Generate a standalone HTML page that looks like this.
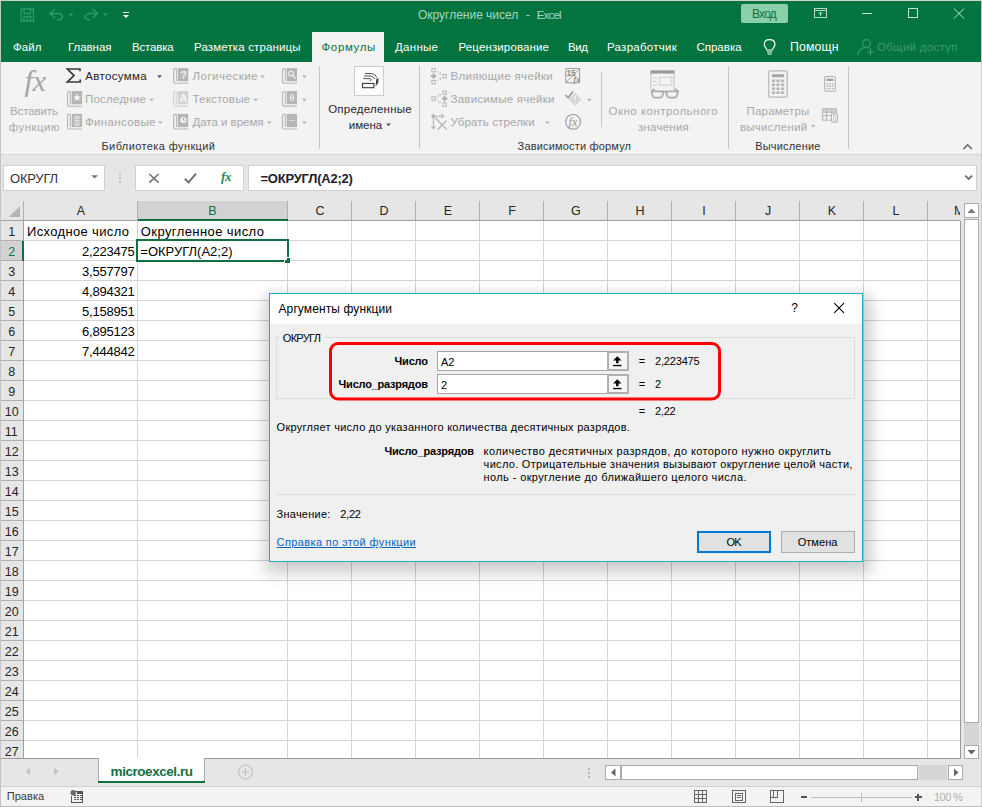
<!DOCTYPE html>
<html lang="ru"><head><meta charset="utf-8"><title>Округление чисел - Excel</title>
<style>
html,body{margin:0;padding:0;background:#e6e6e6;overflow:hidden}
#app{position:relative;width:982px;height:807px;overflow:hidden;background:#e6e6e6;font-family:"Liberation Sans", sans-serif}
#app svg.bg{position:absolute;left:0;top:0}
.t{position:absolute;white-space:pre;line-height:1;margin:0;padding:0}
</style></head><body>
<div id="app">
<svg class="bg" width="982" height="807" viewBox="0 0 982 807" shape-rendering="crispEdges">
<defs><filter id="sh" x="-10%" y="-10%" width="120%" height="125%"><feGaussianBlur stdDeviation="8"/></filter><pattern id="dot" width="2" height="2" patternUnits="userSpaceOnUse"><rect width="2" height="2" fill="#dcdcdc"/><rect width="1" height="1" fill="#d0d0d0"/><rect x="1" y="1" width="1" height="1" fill="#d0d0d0"/></pattern><pattern id="dot2" width="2" height="2" patternUnits="userSpaceOnUse"><rect width="2" height="2" fill="#d4d4d4"/><rect width="1" height="1" fill="#d0d0d0"/><rect x="1" y="1" width="1" height="1" fill="#d0d0d0"/></pattern></defs>
<rect x="0" y="0" width="982" height="62" fill="#03743f"/>
<rect x="312" y="32" width="72" height="30" fill="#f3f3f3"/>
<rect x="741" y="4" width="47" height="19" rx="2" fill="#8ccfab" shape-rendering="geometricPrecision"/>
<rect x="0" y="62" width="982" height="92" fill="#f3f3f3"/>
<rect x="0" y="154" width="982" height="1" fill="#d4d4d4"/>
<line x1="319.5" y1="66" x2="319.5" y2="149" stroke="#c6c6c6"/>
<line x1="419.5" y1="66" x2="419.5" y2="149" stroke="#c6c6c6"/>
<line x1="601.5" y1="72" x2="601.5" y2="127" stroke="#c6c6c6"/>
<line x1="728.5" y1="66" x2="728.5" y2="149" stroke="#c6c6c6"/>
<line x1="848.5" y1="66" x2="848.5" y2="149" stroke="#c6c6c6"/>
<rect x="354.5" y="66.5" width="29" height="29" fill="#fcfcfc" stroke="#cdcdcd"/>
<rect x="3.5" y="165.5" width="101" height="25" fill="#ffffff" stroke="#d0d0d0"/>
<rect x="135.5" y="165.5" width="108" height="25" fill="#ffffff" stroke="#d0d0d0"/>
<rect x="248.5" y="165.5" width="728" height="25" fill="#ffffff" stroke="#d0d0d0"/>
<rect x="24" y="221" width="936" height="538" fill="#ffffff"/>
<rect x="138" y="201" width="149" height="19" fill="url(#dot2)"/>
<rect x="0" y="241" width="23" height="19" fill="url(#dot2)"/>
<line x1="23.5" y1="201" x2="23.5" y2="221" stroke="#b0b0b0"/>
<line x1="137.5" y1="201" x2="137.5" y2="221" stroke="#b0b0b0"/>
<line x1="287.5" y1="201" x2="287.5" y2="221" stroke="#b0b0b0"/>
<line x1="351.5" y1="201" x2="351.5" y2="221" stroke="#b0b0b0"/>
<line x1="415.5" y1="201" x2="415.5" y2="221" stroke="#b0b0b0"/>
<line x1="479.5" y1="201" x2="479.5" y2="221" stroke="#b0b0b0"/>
<line x1="543.5" y1="201" x2="543.5" y2="221" stroke="#b0b0b0"/>
<line x1="607.5" y1="201" x2="607.5" y2="221" stroke="#b0b0b0"/>
<line x1="671.5" y1="201" x2="671.5" y2="221" stroke="#b0b0b0"/>
<line x1="735.5" y1="201" x2="735.5" y2="221" stroke="#b0b0b0"/>
<line x1="799.5" y1="201" x2="799.5" y2="221" stroke="#b0b0b0"/>
<line x1="863.5" y1="201" x2="863.5" y2="221" stroke="#b0b0b0"/>
<line x1="927.5" y1="201" x2="927.5" y2="221" stroke="#b0b0b0"/>
<line x1="137.5" y1="221" x2="137.5" y2="758" stroke="#d4d4d4"/>
<line x1="287.5" y1="221" x2="287.5" y2="758" stroke="#d4d4d4"/>
<line x1="351.5" y1="221" x2="351.5" y2="758" stroke="#d4d4d4"/>
<line x1="415.5" y1="221" x2="415.5" y2="758" stroke="#d4d4d4"/>
<line x1="479.5" y1="221" x2="479.5" y2="758" stroke="#d4d4d4"/>
<line x1="543.5" y1="221" x2="543.5" y2="758" stroke="#d4d4d4"/>
<line x1="607.5" y1="221" x2="607.5" y2="758" stroke="#d4d4d4"/>
<line x1="671.5" y1="221" x2="671.5" y2="758" stroke="#d4d4d4"/>
<line x1="735.5" y1="221" x2="735.5" y2="758" stroke="#d4d4d4"/>
<line x1="799.5" y1="221" x2="799.5" y2="758" stroke="#d4d4d4"/>
<line x1="863.5" y1="221" x2="863.5" y2="758" stroke="#d4d4d4"/>
<line x1="927.5" y1="221" x2="927.5" y2="758" stroke="#d4d4d4"/>
<line x1="24" y1="240.5" x2="960" y2="240.5" stroke="#d4d4d4"/>
<line x1="0" y1="240.5" x2="23" y2="240.5" stroke="#b0b0b0"/>
<line x1="24" y1="260.5" x2="960" y2="260.5" stroke="#d4d4d4"/>
<line x1="0" y1="260.5" x2="23" y2="260.5" stroke="#b0b0b0"/>
<line x1="24" y1="280.5" x2="960" y2="280.5" stroke="#d4d4d4"/>
<line x1="0" y1="280.5" x2="23" y2="280.5" stroke="#b0b0b0"/>
<line x1="24" y1="300.5" x2="960" y2="300.5" stroke="#d4d4d4"/>
<line x1="0" y1="300.5" x2="23" y2="300.5" stroke="#b0b0b0"/>
<line x1="24" y1="320.5" x2="960" y2="320.5" stroke="#d4d4d4"/>
<line x1="0" y1="320.5" x2="23" y2="320.5" stroke="#b0b0b0"/>
<line x1="24" y1="340.5" x2="960" y2="340.5" stroke="#d4d4d4"/>
<line x1="0" y1="340.5" x2="23" y2="340.5" stroke="#b0b0b0"/>
<line x1="24" y1="360.5" x2="960" y2="360.5" stroke="#d4d4d4"/>
<line x1="0" y1="360.5" x2="23" y2="360.5" stroke="#b0b0b0"/>
<line x1="24" y1="380.5" x2="960" y2="380.5" stroke="#d4d4d4"/>
<line x1="0" y1="380.5" x2="23" y2="380.5" stroke="#b0b0b0"/>
<line x1="24" y1="400.5" x2="960" y2="400.5" stroke="#d4d4d4"/>
<line x1="0" y1="400.5" x2="23" y2="400.5" stroke="#b0b0b0"/>
<line x1="24" y1="420.5" x2="960" y2="420.5" stroke="#d4d4d4"/>
<line x1="0" y1="420.5" x2="23" y2="420.5" stroke="#b0b0b0"/>
<line x1="24" y1="440.5" x2="960" y2="440.5" stroke="#d4d4d4"/>
<line x1="0" y1="440.5" x2="23" y2="440.5" stroke="#b0b0b0"/>
<line x1="24" y1="460.5" x2="960" y2="460.5" stroke="#d4d4d4"/>
<line x1="0" y1="460.5" x2="23" y2="460.5" stroke="#b0b0b0"/>
<line x1="24" y1="480.5" x2="960" y2="480.5" stroke="#d4d4d4"/>
<line x1="0" y1="480.5" x2="23" y2="480.5" stroke="#b0b0b0"/>
<line x1="24" y1="500.5" x2="960" y2="500.5" stroke="#d4d4d4"/>
<line x1="0" y1="500.5" x2="23" y2="500.5" stroke="#b0b0b0"/>
<line x1="24" y1="520.5" x2="960" y2="520.5" stroke="#d4d4d4"/>
<line x1="0" y1="520.5" x2="23" y2="520.5" stroke="#b0b0b0"/>
<line x1="24" y1="540.5" x2="960" y2="540.5" stroke="#d4d4d4"/>
<line x1="0" y1="540.5" x2="23" y2="540.5" stroke="#b0b0b0"/>
<line x1="24" y1="560.5" x2="960" y2="560.5" stroke="#d4d4d4"/>
<line x1="0" y1="560.5" x2="23" y2="560.5" stroke="#b0b0b0"/>
<line x1="24" y1="580.5" x2="960" y2="580.5" stroke="#d4d4d4"/>
<line x1="0" y1="580.5" x2="23" y2="580.5" stroke="#b0b0b0"/>
<line x1="24" y1="600.5" x2="960" y2="600.5" stroke="#d4d4d4"/>
<line x1="0" y1="600.5" x2="23" y2="600.5" stroke="#b0b0b0"/>
<line x1="24" y1="620.5" x2="960" y2="620.5" stroke="#d4d4d4"/>
<line x1="0" y1="620.5" x2="23" y2="620.5" stroke="#b0b0b0"/>
<line x1="24" y1="640.5" x2="960" y2="640.5" stroke="#d4d4d4"/>
<line x1="0" y1="640.5" x2="23" y2="640.5" stroke="#b0b0b0"/>
<line x1="24" y1="660.5" x2="960" y2="660.5" stroke="#d4d4d4"/>
<line x1="0" y1="660.5" x2="23" y2="660.5" stroke="#b0b0b0"/>
<line x1="24" y1="680.5" x2="960" y2="680.5" stroke="#d4d4d4"/>
<line x1="0" y1="680.5" x2="23" y2="680.5" stroke="#b0b0b0"/>
<line x1="24" y1="700.5" x2="960" y2="700.5" stroke="#d4d4d4"/>
<line x1="0" y1="700.5" x2="23" y2="700.5" stroke="#b0b0b0"/>
<line x1="24" y1="720.5" x2="960" y2="720.5" stroke="#d4d4d4"/>
<line x1="0" y1="720.5" x2="23" y2="720.5" stroke="#b0b0b0"/>
<line x1="24" y1="740.5" x2="960" y2="740.5" stroke="#d4d4d4"/>
<line x1="0" y1="740.5" x2="23" y2="740.5" stroke="#b0b0b0"/>
<line x1="0" y1="220.5" x2="960" y2="220.5" stroke="#a0a0a0"/>
<line x1="23.5" y1="221" x2="23.5" y2="758" stroke="#a0a0a0"/>
<line x1="960.5" y1="221" x2="960.5" y2="759" stroke="#9a9a9a"/>
<line x1="0" y1="758.5" x2="961" y2="758.5" stroke="#9a9a9a"/>
<path d="M20 206 L20 217 L9 217 Z" fill="#b4b4b4" shape-rendering="geometricPrecision"/>
<rect x="138" y="219" width="150" height="2" fill="#117040"/>
<rect x="22" y="241" width="2" height="20" fill="#117040"/>
<rect x="137" y="240" width="151" height="21" fill="none" stroke="#117040" stroke-width="2"/>
<rect x="284" y="257" width="6" height="6" fill="#ffffff"/>
<rect x="285" y="260" width="5" height="3" fill="#117040"/>
<rect x="287" y="258" width="3" height="2" fill="#117040"/>
<rect x="964.5" y="203.5" width="14" height="14" fill="#ffffff" stroke="#ababab"/>
<rect x="964.5" y="219.5" width="14" height="503" fill="#ffffff" stroke="#ababab"/>
<rect x="964" y="723" width="15" height="22" fill="url(#dot)"/>
<rect x="964.5" y="745.5" width="14" height="13" fill="#ffffff" stroke="#ababab"/>
<path d="M967.5 213 L971.5 208.5 L975.5 213 Z" fill="#777" shape-rendering="geometricPrecision"/>
<path d="M967.5 750 L971.5 754.5 L975.5 750 Z" fill="#666" shape-rendering="geometricPrecision"/>
<rect x="605.5" y="765.5" width="15" height="14" fill="#ffffff" stroke="#ababab"/>
<rect x="621.5" y="765.5" width="296" height="14" fill="#ffffff" stroke="#ababab"/>
<rect x="919" y="765" width="28" height="15" fill="url(#dot)"/>
<rect x="948.5" y="765.5" width="14" height="14" fill="#ffffff" stroke="#ababab"/>
<path d="M615.5 768.5 L611 772.5 L615.5 776.5 Z" fill="#666" shape-rendering="geometricPrecision"/>
<path d="M954 768.5 L958.5 772.5 L954 776.5 Z" fill="#666" shape-rendering="geometricPrecision"/>
<rect x="588" y="768" width="2" height="2" fill="#b8b8b8"/>
<rect x="588" y="772" width="2" height="2" fill="#b8b8b8"/>
<rect x="588" y="776" width="2" height="2" fill="#b8b8b8"/>
<rect x="99" y="758" width="105" height="25" fill="#ffffff"/>
<line x1="98.5" y1="758" x2="98.5" y2="783" stroke="#ababab"/>
<line x1="204.5" y1="758" x2="204.5" y2="783" stroke="#ababab"/>
<rect x="98" y="781" width="107" height="2" fill="#117040"/>
<path d="M30 767.5 L25.5 771.5 L30 775.5 Z" fill="#c4c4c4" shape-rendering="geometricPrecision"/>
<path d="M54 767.5 L58.5 771.5 L54 775.5 Z" fill="#c4c4c4" shape-rendering="geometricPrecision"/>
<g shape-rendering="geometricPrecision" stroke="#c2c2c2" fill="none" stroke-width="1.2"><circle cx="245.5" cy="772" r="7"/><path d="M245.5 768 V776 M241.5 772 H249.5"/></g>
<rect x="0" y="786" width="982" height="21" fill="#f3f3f3"/>
<rect x="0" y="786" width="982" height="1" fill="#d0d0d0"/>
<g id="sticons"></g>
<rect x="0" y="0" width="982" height="1" fill="#cfd6d2"/>
<rect x="0" y="0" width="1" height="62" fill="#b9cdc2"/>
<rect x="981" y="0" width="1" height="62" fill="#b9cdc2"/>
<rect x="0" y="62" width="1" height="745" fill="#c4c4c4"/>
<rect x="981" y="62" width="1" height="745" fill="#cfcfcf"/>
<rect x="0" y="806" width="982" height="1" fill="#bdbdbd"/>
<rect x="265" y="295" width="606" height="278" fill="#000" opacity="0.2" filter="url(#sh)" shape-rendering="geometricPrecision"/>
<rect x="269" y="293" width="594" height="269" fill="#f0f0f0"/>
<rect x="269" y="293" width="594" height="31" fill="#ffffff"/>
<rect x="269.5" y="293.5" width="593" height="268" fill="none" stroke="#18b2c4"/>
<path d="M280 337.5 H276.5 V398.5 H854.5 V337.5 H323.5" fill="none" stroke="#dcdcdc"/>
<rect x="437.5" y="351.5" width="170" height="19" fill="#ffffff" stroke="#a6a6a6"/>
<rect x="608" y="352" width="20" height="18" fill="#f6f6f6" stroke="#b0b0b0" stroke-width="2"/>
<g shape-rendering="geometricPrecision" fill="#000"><path d="M617.3 356.2 l4.2 4.4 h-3 v2.6 h-2.4 v-2.6 h-3 z"/><rect x="613.1" y="364.9" width="8.4" height="1.3"/></g>
<rect x="437.5" y="374.5" width="170" height="19" fill="#ffffff" stroke="#a6a6a6"/>
<rect x="608" y="375" width="20" height="18" fill="#f6f6f6" stroke="#b0b0b0" stroke-width="2"/>
<g shape-rendering="geometricPrecision" fill="#000"><path d="M617.3 379.2 l4.2 4.4 h-3 v2.6 h-2.4 v-2.6 h-3 z"/><rect x="613.1" y="387.9" width="8.4" height="1.3"/></g>
<rect x="330.5" y="343.5" width="389" height="55.5" rx="7.5" ry="7.5" fill="none" stroke="#ff0000" stroke-width="3" shape-rendering="geometricPrecision"/>
<rect x="276" y="494" width="580" height="1" fill="#dcdcdc"/>
<rect x="698" y="532" width="72" height="20" fill="#e1e1e1" stroke="#0078d7" stroke-width="2"/>
<rect x="781.5" y="531.5" width="73" height="21" fill="#e1e1e1" stroke="#adadad"/>
<path d="M834.2 303.1 L844 312.9 M844 303.1 L834.2 312.9" stroke="#000" stroke-width="1.1" fill="none" shape-rendering="geometricPrecision"/>
<g id="qat" shape-rendering="geometricPrecision" fill="none" stroke="#2e9a6a" stroke-width="1.3">
<!-- save -->
<path d="M21 9 H33.5 V21 H21 Z"/>
<path d="M24 9 V13.5 H30.5 V9"/>
<path d="M24 21 V16.5 H30.5 V21 M27 18 V21"/>
<!-- undo -->
<path d="M55 9 L50 13.5 L55 18" stroke-width="1.5"/>
<path d="M50.5 13.5 H58 C64 13.5 64 20 57 20" stroke-width="1.5"/>
<path d="M68.5 13.5 H73.5 L71 16 Z" fill="#2e9a6a" stroke="none"/>
<!-- redo -->
<path d="M92.5 9 L97.5 13.5 L92.5 18" stroke-width="1.5"/>
<path d="M97 13.5 H90 C83.5 13.5 83.5 20 90.5 20" stroke-width="1.5"/>
<path d="M103 13.5 H108 L105.5 16 Z" fill="#2e9a6a" stroke="none"/>
</g>
<g id="qatc" fill="#ffffff">
<rect x="123" y="12" width="6" height="1"/>
<path d="M123 15 H129 L126 18 Z" shape-rendering="geometricPrecision"/>
</g>
<g id="winbtns" shape-rendering="crispEdges" fill="none" stroke="#b4dcc6" stroke-width="1">
<!-- ribbon display -->
<rect x="814.5" y="8.5" width="12" height="9"/>
<line x1="814" y1="10.5" x2="827" y2="10.5"/>
<path d="M820.5 16 V12.5 M818.5 14 L820.5 12 L822.5 14" shape-rendering="geometricPrecision"/>
<!-- min -->
<line x1="862" y1="13.5" x2="872" y2="13.5" stroke="#c4e4d3"/>
<!-- max -->
<rect x="908.5" y="8.5" width="9" height="9" stroke="#c4e4d3"/>
<!-- close -->
<path d="M954 8.5 L964 18.5 M964 8.5 L954 18.5" shape-rendering="geometricPrecision" stroke="#c4e4d3" stroke-width="1"/>
</g>
<g id="tabicons" shape-rendering="geometricPrecision" fill="none">
<!-- lightbulb -->
<path d="M766.8 50 C766.8 48 764.3 47.3 764.3 44.3 C764.3 41.3 766.7 39.6 769.6 39.6 C772.5 39.6 774.9 41.3 774.9 44.3 C774.9 47.3 772.4 48 772.4 50 Z" stroke="#ffffff" stroke-width="1.2"/>
<path d="M767 52 H772.2 M767.6 54 H771.6" stroke="#ffffff" stroke-width="1.1"/>
<!-- person share -->
<circle cx="866.5" cy="43.5" r="3.8" stroke="#3f9a6a" stroke-width="1.2"/>
<path d="M858 55 C858 50 862 47.5 866 47.5 C868 47.5 869.5 48 870.5 48.8" stroke="#3f9a6a" stroke-width="1.2"/>
<path d="M870.5 49 V55.5 M867.3 52.2 H873.7" stroke="#3f9a6a" stroke-width="1.2"/>
</g>

<path d="M80 71.2 V69 H67.4 L74 75.6 L67.4 82 H80.2 V79.6" fill="none" stroke="#3a3a3a" stroke-width="1.7" stroke-linejoin="miter" shape-rendering="geometricPrecision"/>
<path d="M157 75.2 h5 l-2.5 2.8 z" fill="#555" shape-rendering="geometricPrecision"/>
<g shape-rendering="geometricPrecision">
<rect x="71.7" y="91.1" width="10.4" height="13.2" fill="#b6b6b6"/>
<path d="M70.3 91.6 H68.8 Q67.5 91.6 67.5 92.9 V104.5 Q67.5 106.2 69.3 106.2 H82.1" fill="none" stroke="#b6b6b6" stroke-width="1.1"/>
<path d="M70.3 91.6 V104.3" stroke="#b6b6b6" stroke-width="1" fill="none"/>
<path d="M77 93.6 l1.1 2.6 2.8 .2 -2.1 1.9 .7 2.8 -2.5 -1.5 -2.5 1.5 .7 -2.8 -2.1 -1.9 2.8 -.2z" fill="#f3f3f3"/>
</g>
<g shape-rendering="geometricPrecision">
<rect x="71.7" y="113.9" width="10.4" height="13.2" fill="#b6b6b6"/>
<path d="M70.3 114.4 H68.8 Q67.5 114.4 67.5 115.7 V127.3 Q67.5 129 69.3 129 H82.1" fill="none" stroke="#b6b6b6" stroke-width="1.1"/>
<path d="M70.3 114.4 V127.1" stroke="#b6b6b6" stroke-width="1" fill="none"/>
<g fill="none" stroke="#f3f3f3" stroke-width="1"><ellipse cx="77" cy="117.5" rx="2.8" ry="1.1"/><path d="M74.2 120 q2.8 1.8 5.6 0 M74.2 122.3 q2.8 1.8 5.6 0 M74.2 124.4 q2.8 1.8 5.6 0"/></g>
</g>
<path d="M149.2 98.8 h4.6 l-2.3 2.6 z" fill="#b6b6b6" shape-rendering="geometricPrecision"/>
<path d="M158 121.5 h4.6 l-2.3 2.6 z" fill="#b6b6b6" shape-rendering="geometricPrecision"/>
<g shape-rendering="geometricPrecision">
<rect x="177.8" y="68.1" width="10.4" height="13.2" fill="#b6b6b6"/>
<path d="M176.4 68.6 H174.9 Q173.6 68.6 173.6 69.9 V81.5 Q173.6 83.2 175.4 83.2 H188.2" fill="none" stroke="#b6b6b6" stroke-width="1.1"/>
<path d="M176.4 68.6 V81.3" stroke="#b6b6b6" stroke-width="1" fill="none"/>

</g>
<g shape-rendering="geometricPrecision">
<rect x="177.8" y="91" width="10.4" height="13.2" fill="#d2d2d2"/>
<path d="M176.4 91.5 H174.9 Q173.6 91.5 173.6 92.8 V104.4 Q173.6 106.1 175.4 106.1 H188.2" fill="none" stroke="#d2d2d2" stroke-width="1.1"/>
<path d="M176.4 91.5 V104.2" stroke="#d2d2d2" stroke-width="1" fill="none"/>

</g>
<g shape-rendering="geometricPrecision">
<rect x="177.8" y="113.9" width="10.4" height="13.2" fill="#b6b6b6"/>
<path d="M176.4 114.4 H174.9 Q173.6 114.4 173.6 115.7 V127.3 Q173.6 129 175.4 129 H188.2" fill="none" stroke="#b6b6b6" stroke-width="1.1"/>
<path d="M176.4 114.4 V127.1" stroke="#b6b6b6" stroke-width="1" fill="none"/>
<circle cx="183.4" cy="120" r="3.1" fill="#f3f3f3"/><path d="M183.4 118 V120.2 H185.2" stroke="#999" stroke-width=".9" fill="none"/>
</g>
<path d="M260.2 75.6 h4.6 l-2.3 2.6 z" fill="#b6b6b6" shape-rendering="geometricPrecision"/>
<path d="M253.4 98.8 h4.6 l-2.3 2.6 z" fill="#b6b6b6" shape-rendering="geometricPrecision"/>
<path d="M267 121.5 h4.6 l-2.3 2.6 z" fill="#b6b6b6" shape-rendering="geometricPrecision"/>
<g shape-rendering="geometricPrecision">
<rect x="286.6" y="68.1" width="10.4" height="13.2" fill="#b6b6b6"/>
<path d="M285.2 68.6 H283.7 Q282.4 68.6 282.4 69.9 V81.5 Q282.4 83.2 284.2 83.2 H297" fill="none" stroke="#b6b6b6" stroke-width="1.1"/>
<path d="M285.2 68.6 V81.3" stroke="#b6b6b6" stroke-width="1" fill="none"/>
<circle cx="291" cy="73.6" r="2.3" fill="none" stroke="#f3f3f3" stroke-width="1.1"/><path d="M292.8 75.4 L295.3 78.2" stroke="#f3f3f3" stroke-width="1.3"/>
</g>
<g shape-rendering="geometricPrecision">
<rect x="286.6" y="91" width="10.4" height="13.2" fill="#b6b6b6"/>
<path d="M285.2 91.5 H283.7 Q282.4 91.5 282.4 92.8 V104.4 Q282.4 106.1 284.2 106.1 H297" fill="none" stroke="#b6b6b6" stroke-width="1.1"/>
<path d="M285.2 91.5 V104.2" stroke="#b6b6b6" stroke-width="1" fill="none"/>
<ellipse cx="292" cy="97.5" rx="1.7" ry="3.2" fill="none" stroke="#f3f3f3" stroke-width="1"/><path d="M290.3 97.5 h3.4" stroke="#f3f3f3" stroke-width=".9"/>
</g>
<g shape-rendering="geometricPrecision">
<rect x="286.6" y="113.9" width="10.4" height="13.2" fill="#b6b6b6"/>
<path d="M285.2 114.4 H283.7 Q282.4 114.4 282.4 115.7 V127.3 Q282.4 129 284.2 129 H297" fill="none" stroke="#b6b6b6" stroke-width="1.1"/>
<path d="M285.2 114.4 V127.1" stroke="#b6b6b6" stroke-width="1" fill="none"/>
<rect x="289.3" y="120" width="1.1" height="1.1" fill="#f3f3f3"/><rect x="291.3" y="120" width="1.1" height="1.1" fill="#f3f3f3"/><rect x="293.3" y="120" width="1.1" height="1.1" fill="#f3f3f3"/>
</g>
<path d="M302.1 75.6 h4.6 l-2.3 2.6 z" fill="#b6b6b6" shape-rendering="geometricPrecision"/>
<path d="M302.1 98.8 h4.6 l-2.3 2.6 z" fill="#b6b6b6" shape-rendering="geometricPrecision"/>
<path d="M302.1 121.5 h4.6 l-2.3 2.6 z" fill="#b6b6b6" shape-rendering="geometricPrecision"/>
<g shape-rendering="geometricPrecision" fill="none" stroke="#555" stroke-width="1"><rect x="362.5" y="83.4" width="11.4" height="4.3" stroke="#3c3c3c" stroke-width="1.1"/><path d="M365 73.5 H371.6 Q375.6 73.8 376.8 77.6"/><path d="M364 76 H370.6 Q373.6 76.3 374.8 79"/><path d="M363.3 78.6 H369 Q371.2 78.8 372 80.4"/><path d="M376.2 79.6 L378.3 77.8 V82.4 L375.6 86.6 Z" fill="#3c3c3c" stroke="none"/><rect x="369.6" y="80" width="1" height="1" fill="#555" stroke="none"/></g>
<path d="M386.2 123.6 h4.6 l-2.3 2.6 z" fill="#555" shape-rendering="geometricPrecision"/>
<g shape-rendering="geometricPrecision">
<rect x="431.9" y="68.5" width="3.4" height="3.4" fill="none" stroke="#b6b6b6" stroke-width="1"/>
<rect x="431.9" y="80.5" width="3.4" height="3.4" fill="none" stroke="#b6b6b6" stroke-width="1"/>
<rect x="442.9" y="74.5" width="3.4" height="3.4" fill="none" stroke="#b6b6b6" stroke-width="1"/>
<path d="M430.8 76.2 h5.6 M433.6 73.4 v5.6" stroke="#a8a8a8" stroke-width="1.7" fill="none"/>
<path d="M437 71.2 l3.6 3 m0 -2 v2 h-2 M437 81.2 l3.6 -3 m0 2 v-2 h-2" stroke="#b6b6b6" stroke-width=".9" fill="none" stroke-dasharray="1.2 .7"/>
<rect x="431.9" y="96.9" width="3.4" height="3.4" fill="none" stroke="#b6b6b6" stroke-width="1"/>
<rect x="442.9" y="90.9" width="3.4" height="3.4" fill="none" stroke="#b6b6b6" stroke-width="1"/>
<rect x="442.9" y="102.9" width="3.4" height="3.4" fill="none" stroke="#b6b6b6" stroke-width="1"/>
<path d="M441.8 98.6 h5.6 M444.6 95.8 v5.6" stroke="#a8a8a8" stroke-width="1.7" fill="none"/>
<path d="M436.8 97.4 l3.6 -3 m-2 0 h2 v2 M436.8 99.8 l3.6 3 m-2 0 h2 v-2" stroke="#b6b6b6" stroke-width=".9" fill="none" stroke-dasharray="1.2 .7"/>
<g stroke="#b6b6b6" fill="none" stroke-width="1.1"><circle cx="433.4" cy="116.2" r="1.5" fill="#b6b6b6"/><path d="M433.4 116.2 V128.5 M431.3 126.3 l2.1 2.4 2.1 -2.4 M433.4 116.2 H443.5 M441.3 114.2 l2.4 2 -2.4 2"/><path d="M435.5 118 L446.5 129.5 M446.5 120.5 L437.5 129.8" stroke-width="1.3"/></g>
</g>
<path d="M545 121.5 h4.6 l-2.3 2.6 z" fill="#b6b6b6" shape-rendering="geometricPrecision"/>
<g shape-rendering="geometricPrecision" fill="none" stroke="#9a9a9a" stroke-width="1"><path d="M565.8 68.5 H579.6 V82.8 H565.8 Z"/><path d="M566 82.5 L579.5 68.8"/></g>
<g shape-rendering="geometricPrecision" fill="none" stroke="#9a9a9a"><path d="M565.5 95 l2.6 2.8 4.8 -6.3" stroke-width="1.5"/><path d="M575 92.6 L581.3 99.3 L575 106 L568.7 99.3 Z" fill="#d6d6d6" stroke="none"/><path d="M575 95.6 v4.3 M575 101.4 v1.4" stroke="#f3f3f3" stroke-width="1.4"/><circle cx="573.1" cy="121.9" r="7.4" stroke-width="1.1"/></g>
<path d="M587 98.8 h4.6 l-2.3 2.6 z" fill="#b6b6b6" shape-rendering="geometricPrecision"/>
<g shape-rendering="geometricPrecision" fill="none"><rect x="650.3" y="70.3" width="24.2" height="3.3" fill="#9c9c9c"/><path d="M650.8 73 V89.5 M674 73 V89.5" stroke="#c0c0c0" stroke-width="1"/><rect x="659.8" y="77.2" width="12" height="8" stroke="#d8c8cc" stroke-width="1"/><path d="M653 78 h4.5 M653 81.5 h4.5 M653 85 h4.5" stroke="#cfcfcf" stroke-width="1"/><path d="M652 92 Q652 89.3 655 89.3 M677.6 92 Q677.6 89.3 674.6 89.3" stroke="#ababab" stroke-width="1.6"/><path d="M651.6 91.3 H663.6 L662.3 96.3 Q661.8 97.6 660.3 97.6 H654.8 Q653.3 97.6 652.8 96.3 Z M666 91.3 H678 L676.8 96.3 Q676.3 97.6 674.8 97.6 H669.3 Q667.8 97.6 667.3 96.3 Z M663.6 92 H666" stroke="#ababab" stroke-width="1.7"/></g>
<g shape-rendering="geometricPrecision">
<rect x="768.8" y="70.9" width="18.4" height="26.2" rx="1.6" fill="none" stroke="#b6b6b6" stroke-width="1.2"/>
<rect x="771.9" y="74.2" width="12.2" height="3.1" fill="#a6a6a6"/>
<rect x="771.90" y="79.50" width="3.20" height="2.65" fill="#b6b6b6"/>
<rect x="776.40" y="79.50" width="3.20" height="2.65" fill="#b6b6b6"/>
<rect x="780.90" y="79.50" width="3.20" height="2.65" fill="#b6b6b6"/>
<rect x="771.90" y="83.45" width="3.20" height="2.65" fill="#b6b6b6"/>
<rect x="776.40" y="83.45" width="3.20" height="2.65" fill="#b6b6b6"/>
<rect x="780.90" y="83.45" width="3.20" height="2.65" fill="#b6b6b6"/>
<rect x="771.90" y="87.40" width="3.20" height="2.65" fill="#b6b6b6"/>
<rect x="776.40" y="87.40" width="3.20" height="2.65" fill="#b6b6b6"/>
<rect x="780.90" y="87.40" width="3.20" height="2.65" fill="#b6b6b6"/>
<rect x="771.90" y="91.35" width="3.20" height="2.65" fill="#b6b6b6"/>
<rect x="776.40" y="91.35" width="3.20" height="2.65" fill="#b6b6b6"/>
<rect x="780.90" y="91.35" width="3.20" height="2.65" fill="#b6b6b6"/>
</g>
<g shape-rendering="geometricPrecision">
<rect x="824.7" y="76.5" width="10.6" height="14.7" rx="1.2" fill="none" stroke="#b0b0b0" stroke-width="1.1"/>
<rect x="826.6" y="78.6" width="6.8" height="2.4" fill="#a0a0a0"/>
<rect x="826.60" y="83.20" width="1.60" height="1.37" fill="#b0b0b0"/>
<rect x="829.20" y="83.20" width="1.60" height="1.37" fill="#b0b0b0"/>
<rect x="831.80" y="83.20" width="1.60" height="1.37" fill="#b0b0b0"/>
<rect x="826.60" y="85.57" width="1.60" height="1.37" fill="#b0b0b0"/>
<rect x="829.20" y="85.57" width="1.60" height="1.37" fill="#b0b0b0"/>
<rect x="831.80" y="85.57" width="1.60" height="1.37" fill="#b0b0b0"/>
<rect x="826.60" y="87.93" width="1.60" height="1.37" fill="#b0b0b0"/>
<rect x="829.20" y="87.93" width="1.60" height="1.37" fill="#b0b0b0"/>
<rect x="831.80" y="87.93" width="1.60" height="1.37" fill="#b0b0b0"/>
</g>
<path d="M811 125 h4.6 l-2.3 2.6 z" fill="#b6b6b6" shape-rendering="geometricPrecision"/>
<g shape-rendering="geometricPrecision" fill="none" stroke="#b6b6b6" stroke-width="1">
<path d="M822.6 108.7 H836.3 V113 M822.6 108.7 V120.2 H830.5 M822.6 112.2 H836.3 M822.6 115.6 H830.5 M826.6 108.7 V120.2 M830.8 108.7 V113"/>
<rect x="822.6" y="108.7" width="13.7" height="3.5" fill="#b6b6b6" stroke="none" opacity=".5"/>
<rect x="831.4" y="113.8" width="6" height="8.4" rx=".8" fill="#f3f3f3" stroke="#a8a8a8"/>
<path d="M833 116 h2.8" stroke="#a8a8a8"/><path d="M833.2 118.4 h.9 m1 0 h.9 M833.2 120.2 h.9 m1 0 h.9" stroke="#a090c0" stroke-width=".9"/>
</g>
<path d="M963.5 149 L967.7 144.8 L971.9 149" fill="none" stroke="#666" stroke-width="1.6" shape-rendering="geometricPrecision"/>
<path d="M91.2 175.2 h6.8 l-3.4 3.4 z" fill="#777" shape-rendering="geometricPrecision"/>
<rect x="119" y="173" width="2" height="2" fill="#c2c2c2"/>
<rect x="119" y="177" width="2" height="2" fill="#c2c2c2"/>
<rect x="119" y="181" width="2" height="2" fill="#c2c2c2"/>
<path d="M149.3 174 L158.7 182.6 M158.7 174 L149.3 182.6" stroke="#6e6e6e" stroke-width="1.5" fill="none" shape-rendering="geometricPrecision"/>
<path d="M184.8 178.8 L188.6 182.4 L196 173.6" stroke="#6e6e6e" stroke-width="2" fill="none" shape-rendering="geometricPrecision"/>
<path d="M965.3 175.6 L968.7 179 L972.1 175.6" fill="none" stroke="#666" stroke-width="1.7" shape-rendering="geometricPrecision"/>
<g shape-rendering="crispEdges" fill="none" stroke="#555"><path d="M75 791.5 H82.5 V802.5 H71.5 V796"/><path d="M77 791.5 h5.5 v2 h-5.5" fill="#555" stroke="none"/><path d="M73.5 797.5 h2 m1 0 h2 m1 0 h2 M73.5 799.5 h2 m1 0 h2 m1 0 h2" /><path d="M73.5 795.5 h2 m1 0 h2 m1 0 h2"/></g><circle cx="73.2" cy="792.8" r="2.7" fill="#6a6a6a" shape-rendering="geometricPrecision"/>
<g shape-rendering="crispEdges" fill="none" stroke="#666"><rect x="694.5" y="790.5" width="12" height="12"/><path d="M694.5 794.5 h12 M694.5 798.5 h12 M698.5 790.5 v12 M702.5 790.5 v12"/><rect x="732.5" y="790.5" width="13" height="12"/><rect x="735.5" y="793.5" width="7" height="7"/><path d="M737 795.5 h4 M737 797.5 h4"/><path d="M770.5 790.5 h13 v12 h-13 z M770.5 797.5 h7 M773.5 790.5 v7 M777.5 790.5 v7" /></g>
<g shape-rendering="crispEdges"><rect x="801" y="796" width="6" height="2" fill="#555"/><rect x="811" y="797" width="101" height="1" fill="#bdbdbd"/><rect x="861" y="793" width="1" height="9" fill="#bdbdbd"/><rect x="915" y="796" width="7" height="2" fill="#555"/><rect x="917" y="794" width="2" height="7" fill="#555"/></g>
</svg>
<span class="t" id="t0" style="left:418px;top:9px;font-size:12px;color:#a9d8c0;letter-spacing:-0.012px;">Округление чисел</span>
<span class="t" id="t1" style="left:526px;top:9px;font-size:12px;color:#a9d8c0;">-</span>
<span class="t" id="t2" style="left:536.7px;top:10px;font-size:11.5px;color:#a9d8c0;letter-spacing:-0.806px;">Excel</span>
<span class="t" id="t3" style="left:752px;top:8px;font-size:12px;color:#0b7342;letter-spacing:-0.785px;">Вход</span>
<span class="t" id="t4" style="left:13px;top:42px;font-size:11.5px;color:#ffffff;letter-spacing:0.040px;">Файл</span>
<span class="t" id="t5" style="left:68px;top:42px;font-size:11.5px;color:#ffffff;letter-spacing:-0.047px;">Главная</span>
<span class="t" id="t6" style="left:132px;top:42px;font-size:11.5px;color:#ffffff;letter-spacing:-0.175px;">Вставка</span>
<span class="t" id="t7" style="left:194px;top:42px;font-size:11.5px;color:#ffffff;letter-spacing:0.142px;">Разметка страницы</span>
<span class="t" id="t8" style="left:321.5px;top:42px;font-size:11.5px;color:#117040;letter-spacing:0.626px;">Формулы</span>
<span class="t" id="t9" style="left:395px;top:42px;font-size:11.5px;color:#ffffff;letter-spacing:0.287px;">Данные</span>
<span class="t" id="t10" style="left:458.5px;top:42px;font-size:11.5px;color:#ffffff;letter-spacing:0.130px;">Рецензирование</span>
<span class="t" id="t11" style="left:568px;top:42px;font-size:11.5px;color:#ffffff;letter-spacing:-0.406px;">Вид</span>
<span class="t" id="t12" style="left:607px;top:42px;font-size:11.5px;color:#ffffff;letter-spacing:0.272px;">Разработчик</span>
<span class="t" id="t13" style="left:696.4px;top:42px;font-size:11.5px;color:#ffffff;letter-spacing:0.013px;">Справка</span>
<span class="t" id="t14" style="left:789.9px;top:41px;font-size:12.3px;color:#ffffff;letter-spacing:0.162px;">Помощн</span>
<span class="t" id="t15" style="left:877px;top:42px;font-size:11.5px;color:#3f9a6a;letter-spacing:0.294px;">Общий доступ</span>
<span class="t" id="t16" style="left:24.5px;top:66px;font-size:30px;color:#a4a4a4;font-family:'Liberation Serif', serif;font-style:italic;letter-spacing:-0.156px;">fx</span>
<span class="t" id="t17" style="left:10px;top:106px;font-size:11.5px;color:#a8a8a8;letter-spacing:-0.107px;">Вставить</span>
<span class="t" id="t18" style="left:8.8px;top:122px;font-size:11.5px;color:#a8a8a8;letter-spacing:0.448px;">функцию</span>
<span class="t" id="t19" style="left:85.2px;top:71px;font-size:11.5px;color:#262626;letter-spacing:0.345px;">Автосумма</span>
<span class="t" id="t20" style="left:85px;top:94px;font-size:11.5px;color:#a8a8a8;letter-spacing:0.230px;">Последние</span>
<span class="t" id="t21" style="left:85px;top:117px;font-size:11.5px;color:#a8a8a8;letter-spacing:0.343px;">Финансовые</span>
<span class="t" id="t22" style="left:192.5px;top:71px;font-size:11.5px;color:#a8a8a8;letter-spacing:0.493px;">Логические</span>
<span class="t" id="t23" style="left:192.5px;top:94px;font-size:11.5px;color:#a8a8a8;letter-spacing:0.188px;">Текстовые</span>
<span class="t" id="t24" style="left:192.5px;top:117px;font-size:11.5px;color:#a8a8a8;letter-spacing:-0.030px;">Дата и время</span>
<span class="t" id="t25" style="left:101.5px;top:141px;font-size:11px;color:#333333;letter-spacing:0.395px;">Библиотека функций</span>
<span class="t" id="t26" style="left:328.2px;top:104px;font-size:11.5px;color:#262626;letter-spacing:0.236px;">Определенные</span>
<span class="t" id="t27" style="left:348.8px;top:120px;font-size:11.5px;color:#262626;letter-spacing:-0.021px;">имена</span>
<span class="t" id="t28" style="left:450.5px;top:71px;font-size:11.5px;color:#a8a8a8;letter-spacing:0.326px;">Влияющие ячейки</span>
<span class="t" id="t29" style="left:450.5px;top:94px;font-size:11.5px;color:#a8a8a8;letter-spacing:0.239px;">Зависимые ячейки</span>
<span class="t" id="t30" style="left:450.5px;top:117px;font-size:11.5px;color:#a8a8a8;letter-spacing:0.144px;">Убрать стрелки</span>
<span class="t" id="t31" style="left:608.6px;top:106px;font-size:11.5px;color:#a8a8a8;letter-spacing:0.474px;">Окно контрольного</span>
<span class="t" id="t32" style="left:637.9px;top:122px;font-size:11.5px;color:#a8a8a8;letter-spacing:0.249px;">значения</span>
<span class="t" id="t33" style="left:517.6px;top:141px;font-size:11px;color:#333333;letter-spacing:0.172px;">Зависимости формул</span>
<span class="t" id="t34" style="left:746.6px;top:106px;font-size:11.5px;color:#a8a8a8;letter-spacing:0.173px;">Параметры</span>
<span class="t" id="t35" style="left:739.9px;top:122px;font-size:11.5px;color:#a8a8a8;letter-spacing:0.282px;">вычислений</span>
<span class="t" id="t36" style="left:755.2px;top:141px;font-size:11px;color:#333333;letter-spacing:0.189px;">Вычисление</span>
<span class="t" id="t37" style="left:10px;top:172px;font-size:13px;color:#333333;letter-spacing:-0.234px;">ОКРУГЛ</span>
<span class="t" id="t38" style="left:260.5px;top:172px;font-size:13px;color:#20202c;font-weight:700;letter-spacing:-0.245px;">=ОКРУГЛ(A2;2)</span>
<span class="t" id="t39" style="left:76.8px;top:205px;font-size:12.5px;color:#262626;">A</span>
<span class="t" id="t40" style="left:208.3px;top:205px;font-size:12.5px;color:#117040;">B</span>
<span class="t" id="t41" style="left:315.5px;top:205px;font-size:12.5px;color:#262626;">C</span>
<span class="t" id="t42" style="left:379.5px;top:205px;font-size:12.5px;color:#262626;">D</span>
<span class="t" id="t43" style="left:443.8px;top:205px;font-size:12.5px;color:#262626;">E</span>
<span class="t" id="t44" style="left:508.2px;top:205px;font-size:12.5px;color:#262626;">F</span>
<span class="t" id="t45" style="left:571.1px;top:205px;font-size:12.5px;color:#262626;">G</span>
<span class="t" id="t46" style="left:635.5px;top:205px;font-size:12.5px;color:#262626;">H</span>
<span class="t" id="t47" style="left:702.3px;top:205px;font-size:12.5px;color:#262626;">I</span>
<span class="t" id="t48" style="left:764.9px;top:205px;font-size:12.5px;color:#262626;">J</span>
<span class="t" id="t49" style="left:827.8px;top:205px;font-size:12.5px;color:#262626;">K</span>
<span class="t" id="t50" style="left:892.5px;top:205px;font-size:12.5px;color:#262626;">L</span>
<div style="position:absolute;left:0;top:0;width:960px;height:807px;overflow:hidden"><span class="t" id="t51" style="left:954px;top:205px;font-size:12.5px;color:#262626;">M</span></div>
<span class="t" id="t52" style="left:8.3px;top:226px;font-size:12.5px;color:#262626;">1</span>
<span class="t" id="t53" style="left:8.3px;top:246px;font-size:12.5px;color:#117040;">2</span>
<span class="t" id="t54" style="left:8.3px;top:266px;font-size:12.5px;color:#262626;">3</span>
<span class="t" id="t55" style="left:8.3px;top:286px;font-size:12.5px;color:#262626;">4</span>
<span class="t" id="t56" style="left:8.3px;top:306px;font-size:12.5px;color:#262626;">5</span>
<span class="t" id="t57" style="left:8.3px;top:326px;font-size:12.5px;color:#262626;">6</span>
<span class="t" id="t58" style="left:8.3px;top:346px;font-size:12.5px;color:#262626;">7</span>
<span class="t" id="t59" style="left:8.3px;top:366px;font-size:12.5px;color:#262626;">8</span>
<span class="t" id="t60" style="left:8.3px;top:386px;font-size:12.5px;color:#262626;">9</span>
<span class="t" id="t61" style="left:4.8px;top:406px;font-size:12.5px;color:#262626;">10</span>
<span class="t" id="t62" style="left:4.8px;top:426px;font-size:12.5px;color:#262626;">11</span>
<span class="t" id="t63" style="left:4.8px;top:446px;font-size:12.5px;color:#262626;">12</span>
<span class="t" id="t64" style="left:4.8px;top:466px;font-size:12.5px;color:#262626;">13</span>
<span class="t" id="t65" style="left:4.8px;top:486px;font-size:12.5px;color:#262626;">14</span>
<span class="t" id="t66" style="left:4.8px;top:506px;font-size:12.5px;color:#262626;">15</span>
<span class="t" id="t67" style="left:4.8px;top:526px;font-size:12.5px;color:#262626;">16</span>
<span class="t" id="t68" style="left:4.8px;top:546px;font-size:12.5px;color:#262626;">17</span>
<span class="t" id="t69" style="left:4.8px;top:566px;font-size:12.5px;color:#262626;">18</span>
<span class="t" id="t70" style="left:4.8px;top:586px;font-size:12.5px;color:#262626;">19</span>
<span class="t" id="t71" style="left:4.8px;top:606px;font-size:12.5px;color:#262626;">20</span>
<span class="t" id="t72" style="left:4.8px;top:626px;font-size:12.5px;color:#262626;">21</span>
<span class="t" id="t73" style="left:4.8px;top:646px;font-size:12.5px;color:#262626;">22</span>
<span class="t" id="t74" style="left:4.8px;top:666px;font-size:12.5px;color:#262626;">23</span>
<span class="t" id="t75" style="left:4.8px;top:686px;font-size:12.5px;color:#262626;">24</span>
<span class="t" id="t76" style="left:4.8px;top:706px;font-size:12.5px;color:#262626;">25</span>
<span class="t" id="t77" style="left:4.8px;top:726px;font-size:12.5px;color:#262626;">26</span>
<span class="t" id="t78" style="left:4.8px;top:746px;font-size:12.5px;color:#262626;">27</span>
<span class="t" id="t79" style="left:27px;top:225px;font-size:13px;color:#000;letter-spacing:0.347px;">Исходное число</span>
<span class="t" id="t80" style="left:140.8px;top:225px;font-size:13px;color:#000;letter-spacing:0.413px;">Округленное число</span>
<span class="t" id="t81" style="left:140.3px;top:245px;font-size:13px;color:#000;">=ОКРУГЛ(A2;2)</span>
<span class="t" id="t82" style="left:82px;top:245px;font-size:13px;color:#000;letter-spacing:-0.219px;">2,223475</span>
<span class="t" id="t83" style="left:82px;top:265px;font-size:13px;color:#000;letter-spacing:-0.219px;">3,557797</span>
<span class="t" id="t84" style="left:82px;top:285px;font-size:13px;color:#000;letter-spacing:-0.219px;">4,894321</span>
<span class="t" id="t85" style="left:82px;top:305px;font-size:13px;color:#000;letter-spacing:-0.219px;">5,158951</span>
<span class="t" id="t86" style="left:82px;top:325px;font-size:13px;color:#000;letter-spacing:-0.219px;">6,895123</span>
<span class="t" id="t87" style="left:82px;top:345px;font-size:13px;color:#000;letter-spacing:-0.219px;">7,444842</span>
<span class="t" id="t88" style="left:278.5px;top:303px;font-size:12px;color:#000000;letter-spacing:0.104px;">Аргументы функции</span>
<span class="t" id="t89" style="left:791.3px;top:302px;font-size:12px;color:#000000;">?</span>
<span class="t" id="t90" style="left:282.8px;top:333px;font-size:11px;color:#000000;letter-spacing:-0.702px;">ОКРУГЛ</span>
<span class="t" id="t91" style="left:394.6px;top:356px;font-size:11px;color:#000000;font-weight:700;letter-spacing:-0.218px;">Число</span>
<span class="t" id="t92" style="left:338.6px;top:379px;font-size:11px;color:#000000;font-weight:700;letter-spacing:-0.222px;">Число_разрядов</span>
<span class="t" id="t93" style="left:441px;top:357px;font-size:11px;color:#000000;">A2</span>
<span class="t" id="t94" style="left:441px;top:380px;font-size:11px;color:#000000;">2</span>
<span class="t" id="t95" style="left:638.7px;top:356px;font-size:11px;color:#000000;">=</span>
<span class="t" id="t96" style="left:638.7px;top:379px;font-size:11px;color:#000000;">=</span>
<span class="t" id="t97" style="left:638.7px;top:406px;font-size:11px;color:#000000;">=</span>
<span class="t" id="t98" style="left:655px;top:356px;font-size:11px;color:#000000;letter-spacing:-0.170px;">2,223475</span>
<span class="t" id="t99" style="left:655px;top:379px;font-size:11px;color:#000000;">2</span>
<span class="t" id="t100" style="left:655px;top:406px;font-size:11px;color:#000000;letter-spacing:-0.274px;">2,22</span>
<span class="t" id="t101" style="left:276.6px;top:422px;font-size:11px;color:#000000;letter-spacing:0.270px;">Округляет число до указанного количества десятичных разрядов.</span>
<span class="t" id="t102" style="left:384.4px;top:446px;font-size:11px;color:#000000;font-weight:700;letter-spacing:-0.199px;">Число_разрядов</span>
<span class="t" id="t103" style="left:483.6px;top:446px;font-size:11px;color:#000000;letter-spacing:0.401px;">количество десятичных разрядов, до которого нужно округлить</span>
<span class="t" id="t104" style="left:483.6px;top:459px;font-size:11px;color:#000000;letter-spacing:0.302px;">число. Отрицательные значения вызывают округление целой части,</span>
<span class="t" id="t105" style="left:483.6px;top:472px;font-size:11px;color:#000000;letter-spacing:0.384px;">ноль - округление до ближайшего целого числа.</span>
<span class="t" id="t106" style="left:276.6px;top:509px;font-size:11px;color:#000000;letter-spacing:0.232px;">Значение:</span>
<span class="t" id="t107" style="left:340.2px;top:509px;font-size:11px;color:#000000;letter-spacing:-0.207px;">2,22</span>
<span class="t" id="t108" style="left:276.6px;top:537px;font-size:11px;color:#0563c1;text-decoration:underline;letter-spacing:0.375px;">Справка по этой функции</span>
<span class="t" id="t109" style="left:726.5px;top:537px;font-size:11px;color:#000000;letter-spacing:-0.906px;">OK</span>
<span class="t" id="t110" style="left:797.7px;top:537px;font-size:11px;color:#000000;letter-spacing:0.046px;">Отмена</span>
<span class="t" id="t111" style="left:110.6px;top:765px;font-size:13.5px;color:#117040;font-weight:700;letter-spacing:-0.450px;">microexcel.ru</span>
<span class="t" id="t112" style="left:6.7px;top:791px;font-size:11px;color:#3a3a3a;letter-spacing:0.066px;">Правка</span>
<span class="t" id="t113" style="left:934px;top:792px;font-size:11px;color:#b0b0b0;letter-spacing:-0.551px;">100 %</span>
<span class="t" id="t114" style="left:180.3px;top:70px;font-size:11px;color:#f3f3f3;font-weight:700;">?</span>
<span class="t" id="t115" style="left:179.4px;top:93px;font-size:11px;color:#f3f3f3;font-weight:700;">A</span>
<span class="t" id="t116" style="left:566.4px;top:69px;font-size:8.5px;color:#8a8a8a;font-weight:700;">15</span>
<span class="t" id="t117" style="left:573.6px;top:76px;font-size:8px;color:#8a8a8a;font-weight:700;font-family:'Liberation Serif', serif;font-style:italic;">fx</span>
<span class="t" id="t118" style="left:568.6px;top:116px;font-size:12.5px;color:#9a9a9a;font-family:'Liberation Serif', serif;font-style:italic;">fx</span>
<span class="t" id="t119" style="left:221px;top:170px;font-size:13px;color:#1e8b54;font-weight:700;font-family:'Liberation Serif', serif;font-style:italic;letter-spacing:-0.344px;">fx</span>
</div>
</body></html>
